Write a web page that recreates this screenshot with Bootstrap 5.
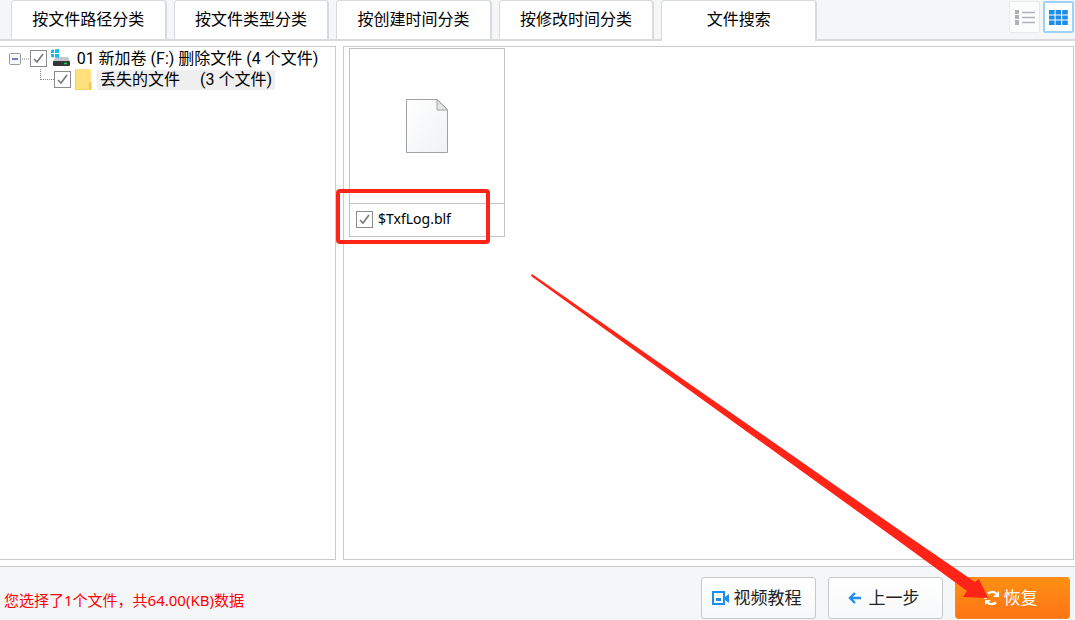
<!DOCTYPE html>
<html lang="zh-CN">
<head>
<meta charset="utf-8">
<meta name="viewport" content="width=device-width, initial-scale=1">
<title>文件搜索</title>
<link href="https://cdn.jsdelivr.net/npm/bootstrap@5.3.0/dist/css/bootstrap.min.css" rel="stylesheet">
<style>
  body { font: 16px/20px "Noto Sans", "Noto Sans CJK SC", sans-serif; color: #000; background: #fff; }
  .app { min-height: 100vh; }
  .top-bar { background: #f5f6f8; height: 41px; padding: 0 1px 0 11px; border-bottom: 2px solid #d8dadd; }
  .tab-strip { flex: 0 1 806px; gap: 7px; border: 0; height: 41px; }
  .tab-strip .nav-link { height: 39px; padding: 0 0 2px; margin: 0; color: #000; background: #fff; border: 2px solid #d8dadd; border-width: 1px 2px 0 1px; border-radius: 4px 4px 0 0; white-space: nowrap; }
  .tab-strip .nav-link.active { height: 41px; padding-bottom: 4px; border-color: #d8dadd; }
  .view-btn { width: 31px; height: 32px; padding: 0; border: 1px solid #e6e8ea; border-radius: 2px; background: #fbfcfc; line-height: 1; }
  .view-btn.active { border: 2px solid #9fd2fb; background: #fff; }
  .view-btn svg, .act svg { display: block; }
  .view-switch { gap: 3px; padding-top: 1px; }
  .panes { gap: 7px; padding: 5px 1px 6px 0; }
  .pane { border: 1px solid #c8cacc; background: #fff; }
  .tree-pane { flex: 0 0 336px; border-left: 0; padding: 1px 0 0 9px; font-family: Roboto, "Noto Sans CJK SC", sans-serif; }
  .tree-row { height: 21px; }
  .tree-row-sub { padding-left: 25px; }
  .twig { flex: none; }
  .tick { appearance: none; flex: none; width: 17px; height: 17px; margin: 0; border: 1px solid #8c8c8c; background: #fff; }
  .tick:checked { background: #fff url("data:image/svg+xml,%3Csvg xmlns='http://www.w3.org/2000/svg' viewBox='0 0 15 15'%3E%3Cpath d='M3 8l3 3 6-8' fill='none' stroke='%23777' stroke-width='1.6'/%3E%3C/svg%3E"); }
  .picked { background: #efefef; padding: 0 3px; margin-left: 4px; }
  .tile { position: relative; width: 156px; margin: 1px 0 0 5px; border: 1px solid #c4c4c4; }
  .thumb { height: 154px; }
  .tile-name { height: 33px; padding: 0 0 2px 6px; gap: 5px; border-top: 1px solid #c4c4c4; font-size: 14px; }
  .mark-box { position: absolute; left: -14px; top: 140px; width: 154px; height: 55px; border: 4px solid #ff2318; border-radius: 4px; pointer-events: none; }
  .foot { background: #f5f6f8; border-top: 1px solid #c8cacc; height: 54px; padding: 0 5px 0 4px; }
  .note { color: #f00; font-size: 15px; padding-top: 12px; }
  .acts { gap: 12px; }
  .act { width: 115px; height: 42px; padding: 0 4px 0 0; gap: 4px; font-size: 17px; line-height: 24px; color: #222; border: 1px solid #c6c9cc; border-radius: 3px; background: linear-gradient(#fff, #f7f8f9); }
  .act-go, .act-go:hover { color: #fff; border-color: #f98a2c; background: linear-gradient(#ff9013, #ff7415); }
  .arrow { position: absolute; right: 86px; bottom: 20px; pointer-events: none; }
</style>
</head>
<body>
<div class="app d-flex flex-column position-relative overflow-hidden">
  <header class="top-bar d-flex">
    <nav class="tab-strip nav nav-tabs flex-nowrap" aria-label="分类">
      <a class="nav-link flex-fill w-100 d-flex align-items-center justify-content-center" href="#">按文件路径分类</a>
      <a class="nav-link flex-fill w-100 d-flex align-items-center justify-content-center" href="#">按文件类型分类</a>
      <a class="nav-link flex-fill w-100 d-flex align-items-center justify-content-center" href="#">按创建时间分类</a>
      <a class="nav-link flex-fill w-100 d-flex align-items-center justify-content-center" href="#">按修改时间分类</a>
      <a class="nav-link active flex-fill w-100 d-flex align-items-center justify-content-center" href="#" aria-current="page">文件搜索</a>
    </nav>
    <div class="view-switch d-flex ms-auto align-items-start">
      <button type="button" class="view-btn btn d-flex align-items-center justify-content-center" aria-label="列表">
        <svg width="20" height="15" viewBox="0 0 20 15"><path d="M0 0h4v4H0zM0 5h4v4H0zM0 10h4v5H0z" fill="#aeb2b8"/><path d="M7 2.500h13M7 7.500h13M7 12.500h13" stroke="#aeb2b8" stroke-width="1.300"/></svg>
      </button>
      <button type="button" class="view-btn btn active d-flex align-items-center justify-content-center" aria-label="缩略图">
        <svg width="19" height="15" viewBox="0 0 19 15" fill="#1d8ee8"><path d="M0 0h5.600v4.400H0zM6.600 0h5.600v4.400H6.600zM13.200 0h5.600v4.400h-5.600zM0 5.400h5.600v4.200H0zM6.600 5.400h5.600v4.200H6.600zM13.200 5.400h5.600v4.200h-5.600zM0 10.600h5.600V15H0zM6.600 10.600h5.600V15H6.600zM13.200 10.600h5.600V15h-5.600z"/></svg>
      </button>
    </div>
  </header>

  <main class="panes d-flex flex-grow-1">
    <section class="pane tree-pane">
      <div class="tree-row d-flex align-items-center">
        <svg class="twig" width="21" height="21" viewBox="0 0 21 21"><rect x=".5" y="5.500" width="11" height="11" rx="1" fill="#f7f7f7" stroke="#999"/><path d="M3 11h6" stroke="#3850a0" stroke-width="1.400"/><path d="M13 11h8" stroke="#888" stroke-dasharray="1 1"/></svg>
        <input class="tick" type="checkbox" id="vol" checked>
        <svg class="twig ms-1" width="20" height="19" viewBox="0 0 20 19"><path d="M0 1l3-.5v3.500H0zM4 .5l4-.5v4H4zM0 5h3v3.500L0 8zM4 5h4v4l-4-.5z" fill="#16b9f3"/><path d="M8 8h9l2 4H2l2-3h4z" fill="#c5c8cb"/><rect x="2" y="12" width="17" height="5" rx="1" fill="#34383b"/><path d="M13 14.500h3" stroke="#2ad34b" stroke-width="1.600"/></svg>
        <label for="vol" class="ms-1 text-nowrap">&hairsp;01 新加卷 (F:) 删除文件 (4 个文件)</label>
      </div>
      <div class="tree-row tree-row-sub d-flex align-items-center">
        <svg class="twig" width="20" height="21" viewBox="0 0 20 21"><path d="M6.500 0v11M7 10.500h13" fill="none" stroke="#888" stroke-dasharray="1 1"/></svg>
        <input class="tick" type="checkbox" id="lost" checked>
        <svg class="twig ms-1" width="18" height="21" viewBox="0 0 18 21"><path d="M1 0h14q1 0 1 1v12h1v7q0 1-1 1H1q-1 0-1-1V1q0-1 1-1z" fill="#ffe07d"/><path d="M14 20v-6q0-1 2-1v7z" fill="#f2c94f"/><path d="M.5 .5v20H16" fill="none" stroke="#f5d161"/></svg>
        <label for="lost" class="picked text-nowrap">丢失的文件<span class="ms-3 ps-1">(3 个文件)</span></label>
      </div>
    </section>

    <section class="pane flex-grow-1">
      <div class="tile">
        <div class="thumb d-flex align-items-center justify-content-center">
          <svg width="42" height="56" viewBox="0 0 42 56"><defs><linearGradient id="paper" x1="0" y1="0" x2="1" y2="1"><stop offset="0" stop-color="#fff"/><stop offset="1" stop-color="#f0f2f4"/></linearGradient></defs><path d="M.5 1.500h31l10 10v43H.5z" fill="url(#paper)" stroke="#a2a2a2"/><path d="M31 1.500v10.500h10.500z" fill="#e6e6e6" stroke="#a2a2a2"/></svg>
        </div>
        <div class="tile-name d-flex align-items-center">
          <input class="tick" type="checkbox" id="blf" checked>
          <label for="blf">$TxfLog.blf</label>
        </div>
        <div class="mark-box"></div>
      </div>
    </section>
  </main>

  <footer class="foot d-flex align-items-center">
    <div class="note flex-grow-1 text-nowrap">您选择了1个文件，共64.00(KB)数据</div>
    <div class="acts d-flex pt-2">
      <button type="button" class="act btn d-flex align-items-center justify-content-center">
        <svg width="18" height="14" viewBox="0 0 18 14"><path d="M1 1h11v12H1z" fill="none" stroke="#1e8fee" stroke-width="2"/><path d="M4 7h5v3H4z" fill="#1e8fee"/><path d="M12 6h1l4-3v9l-4-3h-1z" fill="#1e8fee"/></svg>视频教程</button>
      <button type="button" class="act btn d-flex align-items-center justify-content-center">
        <svg width="17" height="14" viewBox="0 0 17 14"><path d="M13 7H2M7 2L2 7l5 5" fill="none" stroke="#1e8fee" stroke-width="2.400"/></svg>上一步</button>
      <button type="button" class="act act-go btn d-flex align-items-center justify-content-center">
        <svg width="16" height="16" viewBox="0 0 16 16"><path d="M4 3.500Q9 0 13 4M12 12.500Q7 16 3 12M1.500 6v3" fill="none" stroke="#fff" stroke-width="2.400"/><path d="M15 1v6H9zM1 15v-5h6z" fill="#fff"/></svg>恢复</button>
    </div>
  </footer>

  <svg class="arrow" width="460" height="328" viewBox="0 0 460 328"><path d="M3 2L371 258.500 446 310 450 307 459 326 434 325 438 319 371 270 2 4z" fill="#ff2318"/></svg>
</div>
<script src="https://cdn.jsdelivr.net/npm/bootstrap@5.3.0/dist/js/bootstrap.bundle.min.js"></script>
</body>
</html>
